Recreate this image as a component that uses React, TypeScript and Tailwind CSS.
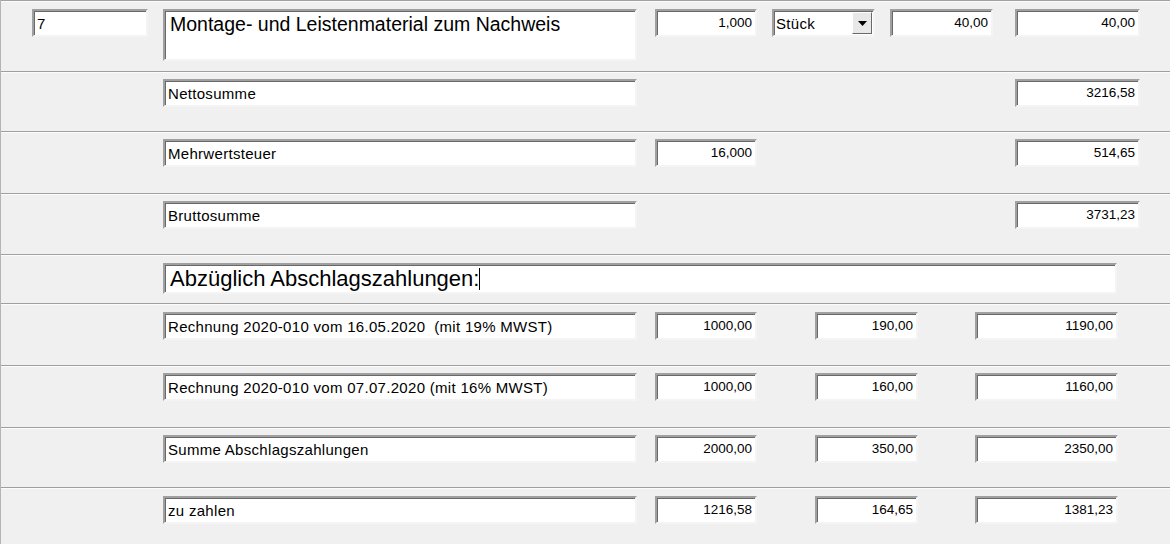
import React from 'react';

const sunken =
  'bg-white border-2 border-t-[#a0a0a0] border-l-[#a0a0a0] border-r-[#f4f4f4] border-b-[#f4f4f4] shadow-[inset_1px_1px_0_#696969]';

function Field({ className = '', right = false, big = false, children }: { className?: string; right?: boolean; big?: boolean; children?: React.ReactNode }) {
  return (
    <div
      className={`${sunken} ${className} flex shrink-0 ${right ? 'justify-end pr-[3px] text-[13.5px]' : 'pl-[3px] text-[15px] tracking-[0.3px]'} ${
        big ? 'items-start pt-[4px]' : 'items-center'
      } text-black leading-none whitespace-pre`}
    >
      {children}
    </div>
  );
}

function Divider() {
  return <div className="h-[2px] border-t border-[#a0a0a0] border-b border-b-[#fcfcfc]" />;
}

function Row({ h, pt, children }: { h: string; pt: string; children: React.ReactNode }) {
  return (
    <>
      <div className={`${h} ${pt} flex items-start`}>{children}</div>
      <Divider />
    </>
  );
}

function SummaryRow({ label, a, b, c, h, pt }: { label: string; a: string; b: string; c: string; h: string; pt: string }) {
  return (
    <Row h={h} pt={pt}>
      <Field className="ml-[162px] w-[474px] h-[28px]">{label}</Field>
      <Field right className="ml-[18px] w-[102px] h-[28px]">{a}</Field>
      <Field right className="ml-[58px] w-[103px] h-[28px]">{b}</Field>
      <Field right className="ml-[57px] w-[143px] h-[28px]">{c}</Field>
    </Row>
  );
}

export default function App() {
  return (
    <div
      className="w-[1170px] h-[544px] overflow-hidden bg-[#f0f0f0] border-l border-[#b4b4b4]"
      style={{ fontFamily: '"Liberation Sans", Arial, sans-serif' }}
    >
      <Divider />
      <Row h="h-[69px]" pt="pt-[7px]">
        <Field className="ml-[31px] w-[116px] h-[28px]">7</Field>
        <Field big className="ml-[15px] w-[474px] h-[52px] !pl-[5px] !text-[19.5px] !tracking-normal">
          Montage- und Leistenmaterial zum Nachweis
        </Field>
        <Field right className="ml-[18px] w-[102px] h-[28px]">1,000</Field>
        <div className={`${sunken} ml-[15px] w-[103px] h-[28px] flex items-center shrink-0`}>
          <span className="flex-1 pl-[2px] text-[15px] tracking-[0.3px] leading-none">Stück</span>
          <div className="w-[20px] h-[22px] mr-[1px] bg-[#e8e8e8] border border-t-white border-l-white border-r-[#696969] border-b-[#696969] flex items-center justify-center">
            <svg width="9" height="5" viewBox="0 0 9 5">
              <path d="M0 0h9L4.5 5z" fill="#000" />
            </svg>
          </div>
        </div>
        <Field right className="ml-[15px] w-[103px] h-[28px]">40,00</Field>
        <Field right className="ml-[22px] w-[125px] h-[28px]">40,00</Field>
      </Row>
      <Row h="h-[58px]" pt="pt-[6px]">
        <Field className="ml-[162px] w-[474px] h-[28px]">Nettosumme</Field>
        <Field right className="ml-[378px] w-[125px] h-[28px]">3216,58</Field>
      </Row>
      <Row h="h-[60px]" pt="pt-[6px]">
        <Field className="ml-[162px] w-[474px] h-[28px]">Mehrwertsteuer</Field>
        <Field right className="ml-[18px] w-[102px] h-[28px]">16,000</Field>
        <Field right className="ml-[258px] w-[125px] h-[28px]">514,65</Field>
      </Row>
      <Row h="h-[59px]" pt="pt-[6px]">
        <Field className="ml-[162px] w-[474px] h-[28px]">Bruttosumme</Field>
        <Field right className="ml-[378px] w-[125px] h-[28px]">3731,23</Field>
      </Row>
      <Row h="h-[47px]" pt="pt-[7px]">
        <Field className="ml-[162px] w-[954px] h-[31px] !text-[22px] !tracking-normal !pl-[5px]">
          Abzüglich Abschlagszahlungen:<span className="inline-block w-px h-[22px] bg-black" />
        </Field>
      </Row>
      <SummaryRow h="h-[60px]" pt="pt-[7px]" label="Rechnung 2020-010 vom 16.05.2020  (mit 19% MWST)" a="1000,00" b="190,00" c="1190,00" />
      <SummaryRow h="h-[60px]" pt="pt-[6px]" label="Rechnung 2020-010 vom 07.07.2020 (mit 16% MWST)" a="1000,00" b="160,00" c="1160,00" />
      <SummaryRow h="h-[58px]" pt="pt-[6px]" label="Summe Abschlagszahlungen" a="2000,00" b="350,00" c="2350,00" />
      <SummaryRow h="h-[55px]" pt="pt-[7px]" label="zu zahlen" a="1216,58" b="164,65" c="1381,23" />
    </div>
  );
}
